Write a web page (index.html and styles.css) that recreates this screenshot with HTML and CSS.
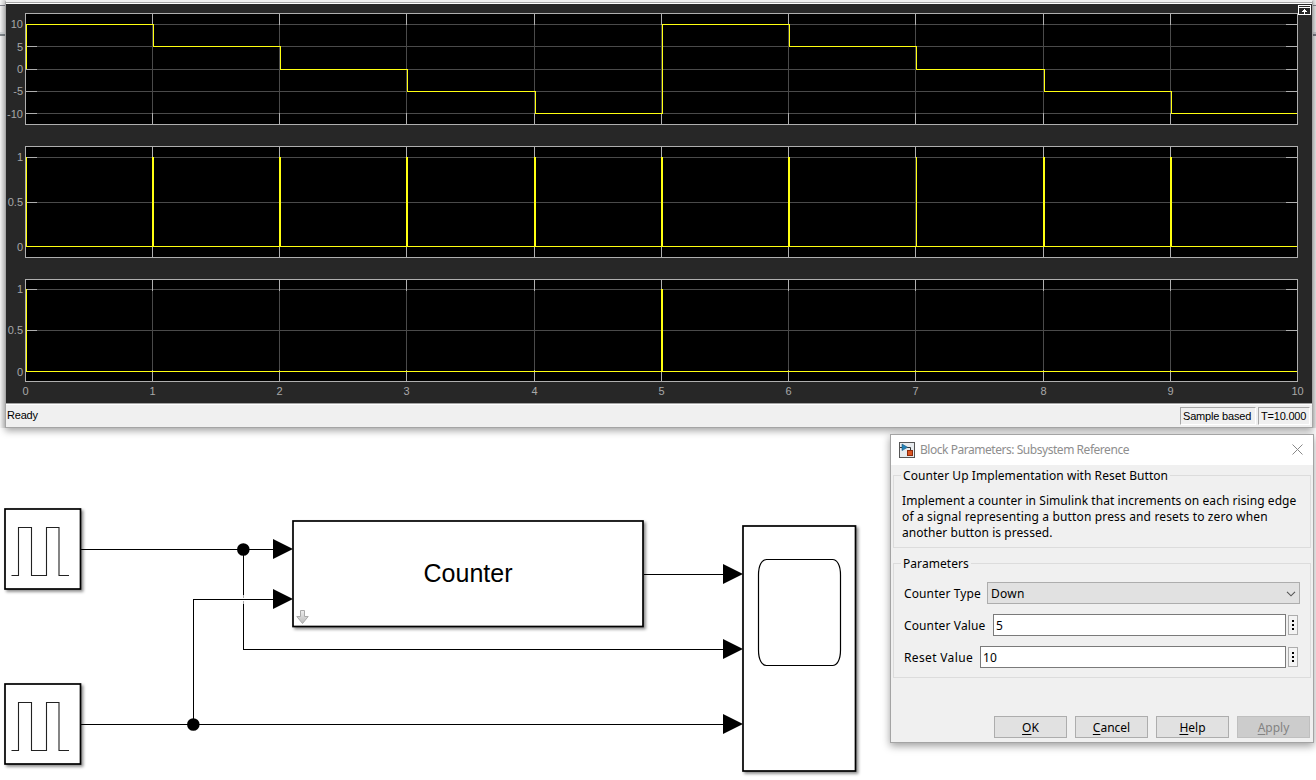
FILE: index.html
```
<!DOCTYPE html>
<html lang="en">
<head>
<meta charset="utf-8">
<title>Counter</title>
<link rel="stylesheet" href="styles.css">
</head>
<body>
<main class="desktop">
  <div class="edge edge-left"></div>
  <div class="edge edge-right"></div>

  <section class="scope">
    <svg class="plots" id="plots" width="1306" height="399" viewBox="6 4 1306 399"></svg>
    <footer class="status">
      <span class="status-ready">Ready</span>
      <span class="status-cell status-mode">Sample based</span>
      <span class="status-cell status-time">T=10.000</span>
    </footer>
  </section>

  <svg class="model" width="880" height="350" viewBox="0 430 880 350">
    <defs>
      <filter id="shadow" x="-20%" y="-20%" width="150%" height="150%">
        <feDropShadow dx="2" dy="2" stdDeviation="1.5" flood-color="#000" flood-opacity=".45"/>
      </filter>
      <linearGradient id="arrowFill" x1="0" y1="0" x2="0" y2="1">
        <stop offset="0" stop-color="#eee"/><stop offset="1" stop-color="#bbb"/>
      </linearGradient>
      <g id="pulse">
        <rect x="5" y="509" width="75.5" height="80" class="block"/>
        <path class="wave" d="M11.5 575.5H18.5V527.5H31.5V575.5H46.5V527.5H59V575.5H69"/>
      </g>
      <path id="head" d="M0 -10L20 0L0 10Z"/>
    </defs>
    <g class="wires">
      <path d="M81 549.5H280M243.5 549V596M243.5 603V649.5H730M193.5 724V599.5H280M81 724.5H730M644 574.5H730"/>
      <path class="bridge" d="M243.5 595V598M243.5 601V604"/>
    </g>
    <circle cx="243.3" cy="549.5" r="6.3"/>
    <circle cx="193.3" cy="724.5" r="6.3"/>
    <use href="#pulse"/>
    <use href="#pulse" y="175"/>
    <rect x="293" y="521" width="350" height="105.5" class="block"/>
    <rect x="743" y="526" width="112.5" height="245" class="block"/>
    <path class="screen" d="M766.5 559.5H832.5C837 559.5 840.5 565 840.5 575V650C840.5 660 837 665.5 832.5 665.5H766.5C762 665.5 758.5 660 758.5 650V575C758.5 565 762 559.5 766.5 559.5Z"/>
    <use href="#head" x="273" y="549"/>
    <use href="#head" x="273" y="599"/>
    <use href="#head" x="723" y="574"/>
    <use href="#head" x="723" y="649"/>
    <use href="#head" x="723" y="724"/>
    <path d="M300.5 610.5H304.5V616.5H308.2L302.5 623.5L296.8 616.5H300.5Z" fill="url(#arrowFill)" stroke="#aaa"/>
    <text x="468" y="582" class="block-name" textLength="89" lengthAdjust="spacingAndGlyphs">Counter</text>
  </svg>

  <section class="dialog">
    <header class="titlebar">
      <svg width="16" height="16" viewBox="0 0 16 16">
        <rect x=".5" y=".5" width="15" height="15" fill="#e7ebee" stroke="#555"/>
        <path d="M1 5.5H3M8 5.5H11.5V9" fill="none" stroke="#333"/>
        <path d="M3 2L8.5 5.3L3 8.6Z" fill="#2382b8" stroke="#14577e" stroke-width=".6"/>
        <rect x="8.5" y="8.5" width="5" height="5" fill="#dd5522" stroke="#8b2a0c"/>
      </svg>
      <h1 class="title">Block Parameters: Subsystem Reference</h1>
      <svg class="close" width="11" height="11" viewBox="0 0 11 11"><path d="M.5.5L10.5 10.5M10.5.5L.5 10.5"/></svg>
    </header>
    <fieldset class="group description">
      <legend>Counter Up Implementation with Reset Button</legend>
      <p>Implement a counter in Simulink that increments on each rising edge<br><span class="loose">of a signal representing a button press and resets to zero when</span><br>another button is pressed.</p>
    </fieldset>
    <fieldset class="group params">
      <legend>Parameters</legend>
      <div class="row"><label class="type">Counter Type</label><div class="select">Down<svg width="10" height="6" viewBox="0 0 10 6"><path d="M1 .8L5 4.8L9 .8"/></svg></div></div>
      <div class="row"><label class="value">Counter Value</label><div class="input">5</div><div class="more"><i></i><i></i><i></i></div></div>
      <div class="row"><label class="reset">Reset Value</label><div class="input">10</div><div class="more"><i></i><i></i><i></i></div></div>
    </fieldset>
    <div class="actions">
      <button><u>O</u>K</button><button><u>C</u>ancel</button><button><u>H</u>elp</button><button disabled><u>A</u>pply</button>
    </div>
  </section>
</main>
<script src="plots.js"></script>
</body>
</html>
```
FILE: styles.css
```
* { box-sizing: border-box; }
body { margin: 0; background: #fff; }
.desktop { position: relative; width: 1316px; height: 780px; overflow: hidden; background: #fff; }

.edge { position: absolute; top: 0; width: 6px; height: 428px; }
.edge-left { left: 0;
  background: linear-gradient(transparent 5px, #85858f 5px 6px, transparent 6px 32px, #d8dbdd 32px 34px, #81878c 34px 36px, transparent 36px), linear-gradient(90deg, #f8f8f8, #d4d4d4); }
.edge-right { right: 0;
  background: linear-gradient(transparent 5px, #85858f 5px 6px, transparent 6px 32px, #c8c8cc 32px 34px, #77777f 34px 36px, transparent 36px), linear-gradient(90deg, #bfbfbf, #eee); }

/* Scope window */
.scope { position: absolute; left: 5px; top: 0; width: 1308px; height: 428px; border: 1px solid #a5a5a5; border-top: 2px solid #efefef;
  background: #a5a5a5; box-shadow: 0 3px 7px rgba(0,0,0,.35); display: flex; flex-direction: column; }
.plots { display: block; margin-top: 2px; flex: none; background: #272727; box-shadow: 0 -1px #fff; }
.plots text { font: 11px "Liberation Sans", Arial, sans-serif; fill: #a8a8a8; }
.axes { fill: #000; stroke: #afafaf; shape-rendering: crispEdges; }
.grid { fill: none; stroke: #4a4a4a; shape-rendering: crispEdges; }
.tick { fill: none; stroke: #afafaf; shape-rendering: crispEdges; }
.signal { fill: none; stroke: #ffff11; shape-rendering: crispEdges; }
.spikes { fill: none; stroke: #ffff11; stroke-width: 2; shape-rendering: crispEdges; }
.dock { fill: none; stroke: #fff; shape-rendering: crispEdges; }
.status { flex: 1; margin-top: 1px; padding: 2px 2px 0 1px; display: flex; background: #f0f0f0; border-top: 1px solid #fff;
  font: 11px/17px "Liberation Sans", Arial, sans-serif; color: #000; }
.status-ready { flex: 1; letter-spacing: -.2px; }
.status-cell { height: 18px; border: 1px solid #a7a7a7; border-right-color: #fff; border-bottom-color: #fff; padding-left: 2px; white-space: nowrap; }
.status-mode { width: 76px; margin-right: 2px; letter-spacing: -.18px; }
.status-time { width: 52px; letter-spacing: -.2px; }

/* Block diagram */
.model { position: absolute; left: 0; top: 430px; }
.block { fill: #fff; stroke: #000; stroke-width: 1.7; filter: url(#shadow); }
.wave { fill: none; stroke: #222; stroke-width: 1.1; }
.wires { fill: none; stroke: #000; shape-rendering: crispEdges; }
.bridge { stroke: #aaa; }
.screen { fill: none; stroke: #000; stroke-width: 1.2; }
.block-name { font: 25px "Liberation Sans", Arial, sans-serif; text-anchor: middle; }

/* Block parameters dialog */
.dialog { position: absolute; left: 890px; top: 434px; width: 424px; height: 309px; border: 1px solid #a4a4a4; background: #f0f0f0;
  box-shadow: 0 3px 8px rgba(0,0,0,.38); font: 12px/16px "Noto Sans", "DejaVu Sans", sans-serif; color: #000; display: flex; flex-direction: column; }
.titlebar { height: 30px; background: #fff; display: flex; align-items: center; padding: 0 10px 1px 8px; flex: none; }
.title { margin: 1px 0 0 5px; font-size: 12px; font-weight: 400; letter-spacing: -.46px; color: #8e8e8e; flex: 1; white-space: nowrap; }
.close { fill: none; stroke: #888; }
.group { margin: 0 2px; padding: 0 7px; border: 1px solid #dcdcdc; min-width: 0; flex: none; letter-spacing: .06px; }
.group legend { padding: 1px 2px 0; height: 16px; line-height: 16px; white-space: nowrap; }
.description { margin-top: 2px; height: 81px; }
.description p { margin: 10px 0 0 1px; white-space: nowrap; }
.loose { letter-spacing: .15px; }
.params { margin-top: 7px; height: 123px; padding: 0 10px; }
.params legend { margin-left: -3px; }
.row { display: flex; align-items: center; height: 22px; margin-bottom: 10px; }
.params legend + .row { margin-top: 11px; }
.row label { flex: none; white-space: nowrap; padding-top: 2px; letter-spacing: .12px; }
.type { width: 83px; }
.value { width: 89px; }
.row .reset { width: 76px; letter-spacing: .35px; }
.select { flex: 1; height: 22px; border: 1px solid #adadad; background: #e1e1e1; padding: 1px 3px 0 3px; display: flex; align-items: center; justify-content: space-between; letter-spacing: .25px; }
.select svg { fill: none; stroke: #555; stroke-width: 1.1; }
.input { flex: 1; height: 22px; border: 1px solid #7a7a7a; background: #fff; padding: 3px 2px 0; }
.more { width: 10px; height: 20px; margin: 0 2px; border: 1px solid #adadad; background: #f4f4f4; display: flex; flex-direction: column; align-items: center; justify-content: center; gap: 2px; }
.more i { width: 2px; height: 2px; background: #000; }
.actions { display: flex; justify-content: flex-end; gap: 8px; margin: 38px 3px 0 0; }
.actions button { width: 73px; height: 22px; padding: 2px 0 0; border: 1px solid #adadad; background: #e1e1e1; font: inherit; color: #000; }
.actions button:disabled { background: #ccc; border-color: #bfbfbf; color: #838383; }
.actions u { text-underline-offset: 2px; }
```
FILE: plots.js
```
const root = document.getElementById('plots');
const xs = [25, 152, 279, 406, 534, 661, 788, 915, 1043, 1170, 1297];
const make = (tag, attrs, text) => {
  const el = document.createElementNS('http://www.w3.org/2000/svg', tag);
  for (const key in attrs) el.setAttribute(key, attrs[key]);
  if (text !== undefined) el.textContent = text;
  root.append(el);
};
const h = v => v + 0.5;

const axes = (top, bottom, rows) => {
  make('rect', { class: 'axes', x: 25.5, y: h(top), width: 1272, height: bottom - top });
  let grid = '', tick = '';
  for (const [y] of rows) {
    grid += `M26 ${h(y)}H1297`;
    tick += `M26 ${h(y)}H37M1286 ${h(y)}H1297`;
  }
  for (const x of xs.slice(1, -1)) {
    grid += `M${h(x)} ${top + 1}V${bottom}`;
    tick += `M${h(x)} ${top}V${top + 12}M${h(x)} ${bottom - 11}V${bottom}`;
  }
  make('path', { class: 'grid', d: grid });
  make('path', { class: 'tick', d: tick });
  for (const [y, label, dy = 4] of rows) make('text', { x: 23, y: y + dy, 'text-anchor': 'end' }, label);
};

axes(13, 124, [[24, '10'], [46, '5', 5], [69, '0'], [91, '-5'], [113, '-10', 5]]);
const levels = [24, 46, 69, 91, 113, 24, 46, 69, 91, 113];
let steps = 'M26.5 69';
levels.forEach((y, i) => { steps += `V${h(y)}H${i === 9 ? 1297 : xs[i + 1] + 1.5}`; });
make('path', { class: 'signal', d: steps });

axes(146, 257, [[157, '1'], [202, '0.5'], [246, '0', 5]]);
make('path', { class: 'signal', d: 'M26.5 157V246.5H1297M916.5 157V246' });
make('path', { class: 'spikes', d: xs.slice(1, -1).filter(x => x !== 915).map(x => `M${x + 1} 157V247`).join('') });

axes(279, 381, [[289, '1'], [330, '0.5'], [371, '0', 5]]);
make('path', { class: 'signal', d: 'M26.5 289V371.5H1297' });
make('path', { class: 'spikes', d: 'M662 289V372' });

xs.forEach((x, i) => make('text', { x: x + 0.5, y: 395, 'text-anchor': 'middle' }, i));
make('path', { class: 'dock', d: 'M1298.5 5.5H1310.5V14.5H1298.5ZM1298 7.5H1311M1304.5 9V14M1303 10.5H1306M1302 11.5H1307' });
```
